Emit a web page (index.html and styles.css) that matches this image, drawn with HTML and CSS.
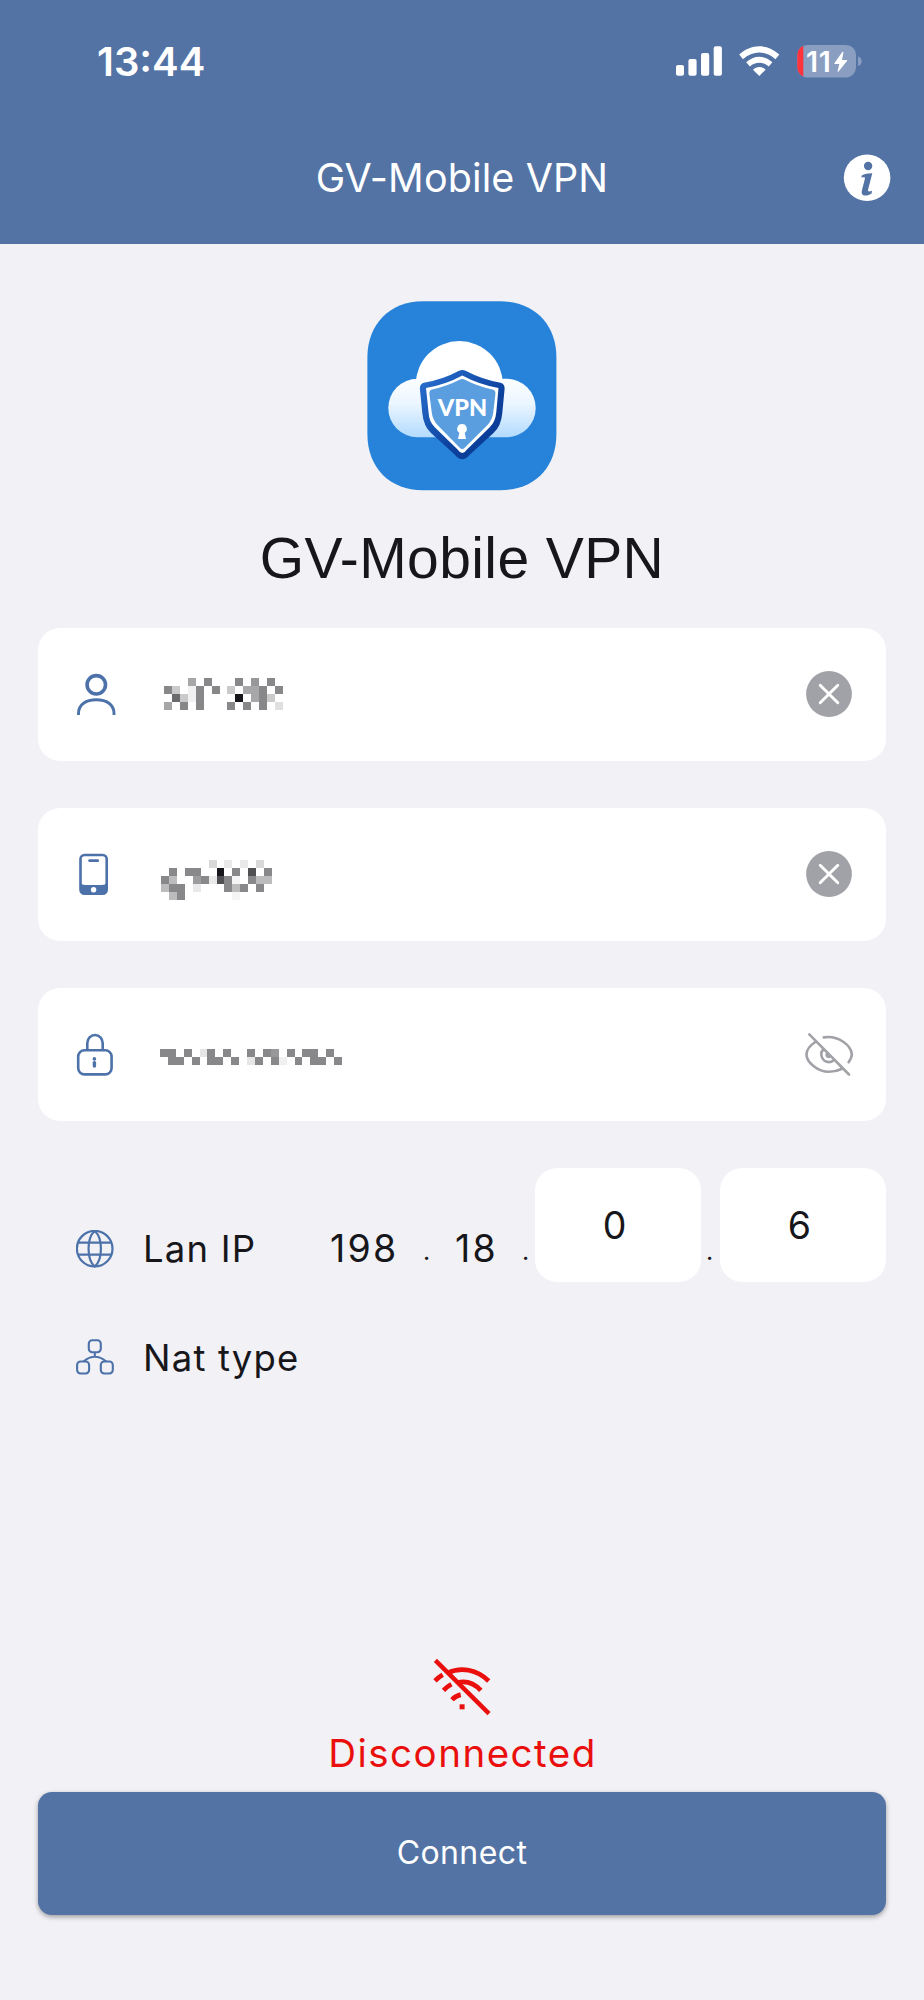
FILE: index.html
```html
<!DOCTYPE html>
<html lang="en">
<head>
<meta charset="utf-8">
<title>GV-Mobile VPN</title>
<link rel="stylesheet" href="styles.css">
</head>
<body>
<div class="screen">
  <header class="header">
    <div class="status">
      <span class="time">13:44</span>
      <div class="indicators">
        <svg class="signal" viewBox="676 46 46 30" width="46" height="30" fill="#fff">
          <rect x="676" y="65" width="8" height="10.7" rx="2"/>
          <rect x="688.4" y="59" width="8.2" height="16.7" rx="2"/>
          <rect x="701" y="53" width="8.2" height="22.7" rx="2"/>
          <rect x="713.7" y="46.3" width="8.2" height="29.4" rx="2"/>
        </svg>
        <svg class="wifi" viewBox="739 46 41 30" width="41" height="30" fill="#fff">
          <path d="M739.2 54.6C745 49.2 752 46.3 759.3 46.3S773.600 49.200 779.300 54.600L775.500 59.300C770.800 54.900 765 52.600 759.300 52.600S747.700 54.900 743 59.300Z"/>
          <path d="M746.200 62.300C750 58.700 754.500 56.700 759.300 56.700S768.600 58.700 772.400 62.300L768.700 66.400C766 64 762.800 62.700 759.300 62.700S752.600 64 749.900 66.400Z"/>
          <path d="M753 69.700C754.800 68 757 67.100 759.300 67.100S763.800 68 765.600 69.700L759.300 76Z"/>
        </svg>
        <div class="battery">
          <svg viewBox="797 44 66 34" width="66" height="34">
            <clipPath id="cell"><rect x="797.3" y="44.9" width="58.7" height="32.600" rx="10"/></clipPath>
            <rect x="797.3" y="44.9" width="58.7" height="32.600" rx="10" fill="#899ec0"/>
            <rect x="797" y="44" width="6.300" height="34" fill="#ff333b" clip-path="url(#cell)"/>
            <path d="M858 56.500C860.500 57.200 861.700 59 861.700 61.300S860.500 65.400 858 66.100Z" fill="#899ec0"/>
            <path d="M842.300 52L834.300 63.200Q834 64 835 64H839.300L837.500 71.500Q838 72 838.600 71.500L847.200 60.700Q847.500 60 846.500 60H842L843.500 52.500Q843 51.500 842.300 52Z" fill="#fff"/>
          </svg>
          <span class="level">11</span>
        </div>
      </div>
    </div>
    <div class="titlebar">
      <span></span>
      <span class="title">GV-Mobile VPN</span>
      <svg class="info" viewBox="843 154 48 48" width="48" height="48">
        <circle cx="867.100" cy="177.800" r="23.300" fill="#fff"/>
        <circle cx="868.100" cy="166" r="4.200" fill="#5373a5"/>
        <path d="M861.700 175.400C864.500 174 868 173.200 872.300 173.300L868.100 189.600C867.700 191.700 868.800 192.100 872 190.700L871.600 193.500C868 196 861.500 197 861.700 192.200C861.900 190 864.400 181 864.900 178.800C865.200 176.900 864.200 176.900 861.400 177.600Z" fill="#5373a5"/>
      </svg>
    </div>
  </header>

  <main class="content">
    <svg class="logo" viewBox="367 301 190 190" width="190" height="190">
      <defs>
        <linearGradient id="cloud" gradientUnits="userSpaceOnUse" x1="0" y1="341" x2="0" y2="437"><stop offset=".35" stop-color="#fff"/><stop offset=".65" stop-color="#ebf6ff"/><stop offset="1" stop-color="#b3dbff"/></linearGradient>
        <linearGradient id="rim" x1="0" y1="0" x2="1" y2="1"><stop offset="0" stop-color="#2b72d2"/><stop offset=".6" stop-color="#0d429f"/><stop offset="1" stop-color="#08378d"/></linearGradient>
      </defs>
      <path d="M423 301.200H500C534 301.200 556.400 324 556.400 357V434C556.400 468 534 490.300 500 490.300H423C390 490.300 367.400 468 367.400 434V357C367.400 324 390 301.200 423 301.200Z" fill="#2783da"/>
      <g fill="url(#cloud)">
        <rect x="388.300" y="378.700" width="147.400" height="58.500" rx="29.250"/>
        <circle cx="459.300" cy="384.700" r="43.600"/>
      </g>
      <path d="M459 370.800Q462.300 369 465.600 370.800Q482 379.500 500.500 382.800Q505 384 504.600 389L502.300 413Q501.200 426 493.500 433L470 454.500Q462.300 464 454.600 454.500L431 433Q423.500 426 422.300 413L419.900 389Q419.500 384 424 382.800Q443 379.500 459 370.800Z" fill="url(#rim)"/>
      <path d="M462.300 375.500Q479 384.500 498.500 388L496.300 412Q495.500 422 489.500 427.500L467 449.500Q462.300 456.500 457.600 449.500L435 427.500Q429 422 428.500 412L426 388Q446 384.500 462.300 375.500Z" fill="#fff"/>
      <path d="M459.500 379.700Q462.300 378.300 465 379.700Q477 386 492.500 389.500Q495.800 390.300 495.400 394L493.300 412Q492.500 420 487 425.500L465 447.500Q462.300 450.500 459.500 447.500L438 425.500Q432.500 420 431.700 412L429.400 394Q429 390.300 432 389.500Q447.500 386 459.500 379.700Z" fill="#5a9edf"/>
      <text class="logo-text" x="437.800" y="415.600" textLength="49.500">VPN</text>
      <path d="M462 424A4.800 4.800 0 0 1 464.700 432.800L466 439H458L459.300 432.800A4.800 4.800 0 0 1 462 424Z" fill="#fff"/>
    </svg>
    <h1 class="name">GV-Mobile VPN</h1>

    <div class="field">
      <svg class="field-icon" viewBox="76 670 44 48" width="44" height="48" fill="none" stroke="#4c72a9">
        <circle cx="96.300" cy="684.800" r="9.200" stroke-width="3.600"/>
        <path d="M78.500 715V713.500C78.500 704.500 86 699.800 96.300 699.800S114 704.500 114 713.500V715" stroke-width="2.900"/>
      </svg>
      <svg class="mosaic user-value" viewBox="0 0 15 4" width="119" height="32">
        <path fill="#88888b" d="M5 0h1v1h-1zM9 0h1v1h-1zM13 0h1v1h-1zM0 1h1v1h-1zM4 1h1v3h-1zM6 1h1v1h-1zM12 1h1v3h-1zM14 1h1v1h-1zM2 3h1v1h-1zM8 3h1v1h-1zM10 3h1v1h-1z"/>
        <path fill="#a7a7a9" d="M3 0h1v1h-1zM11 1h1v2h-1zM10 1h1v1h-1zM0 3h1v1h-1z"/>
        <path fill="#98989a" d="M11 0h1v1h-1z"/>
        <path fill="#cacacb" d="M1 1h1v1h-1zM8 1h1v1h-1zM13 2h1v1h-1zM2 2h1v1h-1z"/>
        <path fill="#f1f1f1" d="M3 1h1v2h-1z"/><path fill="#e0e0e1" d="M14 3h1v1h-1z"/>
        <path fill="#6b6b6e" d="M1 2h1v1h-1z"/><path fill="#17171b" d="M9 2h1v1h-1z"/>
      </svg>
      <svg class="clear" viewBox="-24 -24 48 48" width="48" height="48">
        <circle r="22.900" fill="#a1a2a7"/><path d="M-8.800-8.800L8.800 8.800M8.800-8.800L-8.800 8.800" stroke="#fff" stroke-width="2.900" stroke-linecap="round"/>
      </svg>
    </div>

    <div class="field">
      <svg class="field-icon" viewBox="76 850 44 48" width="44" height="48">
        <rect x="80.500" y="855" width="26.200" height="38.700" rx="4" fill="none" stroke="#4c72a9" stroke-width="2.600"/>
        <path d="M80.500 882.500Q82 885 85 885H102Q105.500 885 106.700 882.500V890Q106.700 893.700 103 893.700H84Q80.500 893.700 80.500 890Z" fill="#4c72a9"/>
        <path d="M89.600 860.700H97.700" stroke="#4c72a9" stroke-width="2.800" stroke-linecap="round"/>
        <circle cx="93.600" cy="889.700" r="2.700" fill="#fff"/>
      </svg>
      <svg class="mosaic device-value" viewBox="0 0 14 5" width="111" height="40">
        <path fill="#88888b" d="M1 1h1v1h-1zM3 1h2v1h-2zM9 1h1v1h-1zM13 1h1v1h-1zM0 2h1v1h-1zM5 2h1v1h-1zM8 2h1v2h-1zM11 2h1v1h-1zM1 3h2v1h-2zM10 3h1v1h-1zM12 3h1v1h-1zM2 4h1v1h-1z"/>
        <path fill="#d8d8d9" d="M6 0h1v1h-1zM12 0h1v1h-1z"/>
        <path fill="#e9e9ea" d="M8 0h1v1h-1zM10 0h1v1h-1zM6 2h1v1h-1zM4 3h1v1h-1z"/>
        <path fill="#bcbcbd" d="M1 2h1v1h-1zM12 2h2v1h-2zM9 3h1v1h-1zM0 3h1v1h-1zM1 4h1v1h-1z"/>
        <path fill="#9c9c9e" d="M4 2h1v1h-1z"/><path fill="#f5f5f6" d="M9 2h1v1h-1zM9 4h1v1h-1z"/>
        <path fill="#17171b" d="M7 1h1v1h-1z"/><path fill="#505053" d="M11 1h1v1h-1zM7 2h1v1h-1z"/>
      </svg>
      <svg class="clear" viewBox="-24 -24 48 48" width="48" height="48">
        <circle r="22.900" fill="#a1a2a7"/><path d="M-8.800-8.800L8.800 8.800M8.800-8.800L-8.800 8.800" stroke="#fff" stroke-width="2.900" stroke-linecap="round"/>
      </svg>
    </div>

    <div class="field">
      <svg class="field-icon" viewBox="76 1030 44 48" width="44" height="48" fill="none" stroke="#4c72a9" stroke-width="2.600">
        <rect x="78.200" y="1050.200" width="33.400" height="24.200" rx="6.300"/>
        <path d="M87.300 1050V1043A7.700 8 0 0 1 102.700 1043V1050"/>
        <circle cx="94.400" cy="1058.900" r="1.800" fill="#4c72a9" stroke="none"/>
        <path d="M94.400 1062.600V1066" stroke-width="3.400" stroke-linecap="round"/>
      </svg>
      <svg class="mosaic password-value" viewBox="0 0 23 2" width="182" height="16">
        <path fill="#88888b" d="M0 0h2v1h-2zM3 0h1v1h-1zM6 0h1v2h-1zM8 0h1v1h-1zM11 0h1v1h-1zM13 0h1v1h-1zM16 0h1v1h-1zM18 0h2v1h-2zM21 0h1v1h-1zM1 1h2v1h-2zM4 1h1v1h-1zM7 1h1v1h-1zM9 1h1v1h-1zM12 1h1v1h-1zM14 1h1v1h-1zM17 1h1v1h-1zM19 1h2v1h-2zM22 1h1v1h-1z"/>
        <path fill="#98989a" d="M14 0h1v1h-1z"/>
        <path fill="#e6e6e7" d="M5 0h1v1h-1zM11 1h1v1h-1z"/><path fill="#f0f0f0" d="M15 1h1v1h-1z"/>
      </svg>
      <svg class="clear" viewBox="805 1030 48 48" width="48" height="48" fill="none" stroke="#a1a2a7" stroke-width="2.600" stroke-linecap="round">
        <path d="M809.300 1034.300L849 1074.500"/>
        <path d="M823.800 1037.400C838.500 1034.800 851.500 1046 851.800 1054.500C851.800 1057.500 850.500 1059.500 848.600 1062.200"/>
        <path d="M815.300 1042C810 1045.500 806.500 1050.500 806.500 1054.400C806.500 1062 817.500 1071.800 829 1071.800C834 1071.800 838 1070.700 841.500 1069"/>
        <path d="M823.300 1049.500C818.800 1054 822.500 1062 829 1062.100Q831.500 1062 833 1060.700M826.700 1054.300Q826.300 1056.500 829 1057"/>
      </svg>
    </div>

    <div class="lan">
      <svg class="row-icon" viewBox="76 1230 38 38" width="38" height="38" fill="none" stroke="#4c72a9" stroke-width="2.200">
        <circle cx="94.700" cy="1248.700" r="17.800"/>
        <path d="M78 1242.700H111.400M78 1254.700H111.400M94.700 1231C86.500 1238 86.500 1259.500 94.700 1266.500C103 1259.500 103 1238 94.700 1231"/>
      </svg>
      <span class="label lan-label">Lan IP</span>
      <span class="label octet-a">198</span>
      <span class="dot dot-a">.</span>
      <span class="label octet-b">18</span>
      <span class="dot dot-b">.</span>
      <span class="octet">0</span>
      <span class="dot dot-c">.</span>
      <span class="octet">6</span>
    </div>

    <div class="nat">
      <svg class="row-icon" viewBox="76 1338 38 38" width="38" height="38" fill="none" stroke="#4c72a9" stroke-width="2.100">
        <rect x="88.800" y="1340.200" width="12" height="12" rx="3.500"/>
        <rect x="77.100" y="1361.500" width="12" height="12" rx="3.500"/>
        <rect x="100.800" y="1361.500" width="12" height="12" rx="3.500"/>
        <path d="M94.800 1352V1356.500M83.500 1361.500Q94.800 1352 106.200 1361.500"/>
      </svg>
      <span class="label nat-label">Nat type</span>
    </div>
  </main>

  <footer class="footer">
    <svg viewBox="432 1657 60 60" width="60" height="60" fill="none" stroke="#ea0f0c" stroke-width="4.700">
      <path d="M435.400 1660.400L489 1713.600" stroke-width="4.400"/>
      <path d="M447.500 1673C461 1666.500 477 1669.500 488.700 1681"/>
      <path d="M457.500 1682.500C466 1680.500 474 1683 480.800 1690.300"/>
      <path d="M435 1680.800Q438.500 1677.300 442.700 1674.800M443.500 1690.300Q447 1686.700 451.400 1684.300M452 1699.800Q455.500 1695.800 460.700 1694.600"/>
      <rect x="459.600" y="1704.300" width="5" height="5" fill="#ea0f0c" stroke="none"/>
    </svg>
    <span class="state">Disconnected</span>
    <button class="connect">Connect</button>
  </footer>
</div>
</body>
</html>
```

FILE: styles.css
```css
* { box-sizing: border-box; }
body { margin: 0; background: #f1f1f6; font-family: Inter, "Liberation Sans", sans-serif; color: #17171b; }
svg { display: block; flex: none; }
.screen { display: flex; flex-direction: column; width: 924px; height: 2000px; background: #f1f1f6; }

.header { flex: none; height: 244px; background: #5373a5; color: #fff; }
.status { display: flex; justify-content: space-between; height: 112px; padding: 0 61px 0 97px; }
.time { margin-top: 38px; font-size: 40px; line-height: 48px; font-weight: 600; }
.indicators { display: flex; padding-top: 44px; }
.signal { margin-top: 2px; }
.wifi { margin: 2px 17px 0; }
.battery { position: relative; }
.level { position: absolute; left: 9px; top: 0; font-size: 28.500px; line-height: 35px; font-weight: 600; letter-spacing: .6px; }
.titlebar { display: grid; grid-template-columns: 48px 1fr 48px; align-items: center; padding: 0 33px; height: 132px; }
.title { text-align: center; font-size: 39.500px; font-weight: 400; line-height: 48px; letter-spacing: .1px; }
.info { margin-top: -1px; }

.content { flex: 1; padding: 57px 38px 0; }
.logo { margin: 0 auto; }
.logo-text { font: 900 23.500px Lato, sans-serif; fill: #fff; }
.name { margin: 35px 0 38px; font: 400 57px/64px "Liberation Sans", Arial, sans-serif; letter-spacing: .4px; text-align: center; }
.field { display: flex; align-items: center; height: 133px; margin-bottom: 47px; padding: 0 33px 1px 38px; border-radius: 22px; background: #fff; }
.clear { margin-left: auto; overflow: visible; }
.mosaic { shape-rendering: crispEdges; }
.user-value { margin-left: 44px; }
.device-value { margin: 11px 0 0 41px; }
.password-value { margin: 5px 0 0 39.700px; }

.lan { display: flex; height: 114px; }
.row-icon { margin-left: 38px; }
.lan .row-icon { margin-top: 62px; }
.label { flex: none; font-size: 36.500px; font-weight: 400; line-height: 44px; letter-spacing: 1.200px; white-space: nowrap; }
.lan .label { margin-top: 59px; }
.lan-label { width: 187px; margin-left: 29px; }
.lan .octet-a, .lan .octet-b { font-size: 37.500px; letter-spacing: 2.300px; }
.octet-a { width: 93px; }
.octet-b { width: 67px; }
.dot { flex: none; font-size: 25px; line-height: 32px; margin-top: 67px; }
.dot-a { width: 32px; }
.dot-b { width: 13px; }
.dot-c { width: 19px; padding-left: 5px; }
.octet { flex: none; width: 166px; height: 114px; border-radius: 22px; background: #fff; text-align: center; font-size: 37.500px; font-weight: 400; line-height: 116px; padding-right: 7px; }
.nat { display: flex; align-items: center; height: 44px; margin-top: 54px; }
.nat .row-icon { margin-top: -2px; }
.nat-label { margin-left: 29px; }

.footer { flex: none; display: flex; flex-direction: column; align-items: center; height: 343px; padding: 0 38px; color: #ea0f0c; }
.state { margin-top: 13px; font-size: 38.500px; font-weight: 400; line-height: 46px; letter-spacing: 1.500px; padding-left: 1px; }
.connect { width: 848px; height: 123px; margin-top: 15.500px; padding: 0; border: 0; border-radius: 14px; background: #5373a5; box-shadow: 0 2px 5px rgba(0, 0, 0, .35); color: #fff; font: 400 32px/40px Inter, "Liberation Sans", sans-serif; letter-spacing: .4px; }
```
